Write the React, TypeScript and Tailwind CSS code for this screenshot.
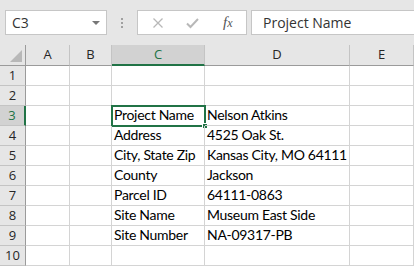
import { Fragment } from 'react';

const cols = ['A', 'B', 'C', 'D', 'E'];

const data: Record<number, [string, string]> = {
  3: ['Project Name', 'Nelson Atkins'],
  4: ['Address', '4525 Oak St.'],
  5: ['City, State Zip', 'Kansas City, MO 64111'],
  6: ['County', 'Jackson'],
  7: ['Parcel ID', '64111-0863'],
  8: ['Site Name', 'Museum East Side'],
  9: ['Site Number', 'NA-09317-PB'],
};

const ui = "font-['Open_Sans','Noto_Sans',sans-serif]";
const cellFont = "font-['Lato','Liberation_Sans',sans-serif] text-[14px] tracking-[-0.3px]";

function FormulaBar() {
  return (
    <div className={`flex h-[45px] items-start bg-[#e6e6e6] pt-[10px] ${ui}`}>
      <div className="ml-[5px] flex h-[25px] w-[102px] items-center justify-between border border-[#c6c6c6] bg-white pl-[6px] pr-[6px] text-[14px] text-[#333]">
        <span>C3</span>
        <span className="h-0 w-0 border-x-[4px] border-t-[4px] border-x-transparent border-t-[#777]" />
      </div>
      <div className="flex h-[25px] w-[30px] flex-col items-center justify-center gap-[2px]">
        <span className="h-[2px] w-[2px] bg-[#a0a0a0]" />
        <span className="h-[2px] w-[2px] bg-[#a0a0a0]" />
        <span className="h-[2px] w-[2px] bg-[#a0a0a0]" />
      </div>
      <div className="flex h-[25px] w-[110px] items-center border border-[#c6c6c6] bg-white">
        <svg className="ml-[14px]" width="12" height="12" viewBox="0 0 12 12">
          <path d="M1.5 1.5 L10.5 10.5 M10.5 1.5 L1.5 10.5" stroke="#b8b8b8" strokeWidth="1.3" fill="none" />
        </svg>
        <svg className="ml-[22px]" width="13" height="12" viewBox="0 0 13 12">
          <path d="M1 6.5 L4.5 10 L12 2" stroke="#b8b8b8" strokeWidth="2" fill="none" />
        </svg>
        <span className="ml-[24px] font-['Liberation_Serif',serif] text-[15px] italic text-[#555]">
          f<span className="text-[12px]">x</span>
        </span>
      </div>
      <div className="ml-[4px] flex h-[25px] flex-1 items-center border border-r-0 border-[#c6c6c6] bg-white pl-[11px] text-[14px] text-[#333]">
        Project Name
      </div>
    </div>
  );
}

export default function App() {
  return (
    <div className="h-[266px] w-[414px] overflow-hidden bg-white">
      <FormulaBar />
      <div className={`grid grid-cols-[26px_44px_42px_93px_145px_64px] ${ui}`}>
        <div className="relative h-[21px] border-b border-r border-[#9b9b9b] bg-[#e6e6e6]">
          <span className="absolute bottom-[3px] right-[3px] h-0 w-0 border-b-[12px] border-l-[12px] border-b-[#b8b8b8] border-l-transparent" />
        </div>
        {cols.map((c) =>
          c === 'C' ? (
            <div
              key={c}
              className="flex h-[21px] items-center justify-center border-b-2 border-r border-b-[#217346] border-r-[#c4c4c4] bg-[#d2d2d2] text-[13px] text-[#217346]"
            >
              {c}
            </div>
          ) : (
            <div
              key={c}
              className="flex h-[21px] items-center justify-center border-b border-r border-b-[#9b9b9b] border-r-[#c4c4c4] bg-[#e6e6e6] text-[13px] text-[#262626]"
            >
              {c}
            </div>
          ),
        )}
        {Array.from({ length: 10 }, (_, i) => i + 1).map((r) => (
          <Fragment key={r}>
            {r === 3 ? (
              <div className="flex h-[20px] items-center justify-center border-b border-r-2 border-b-[#c4c4c4] border-r-[#217346] bg-[#d2d2d2] text-[13px] text-[#217346]">
                {r}
              </div>
            ) : (
              <div className="flex h-[20px] items-center justify-center border-b border-r border-b-[#c4c4c4] border-r-[#9b9b9b] bg-[#e6e6e6] text-[13px] text-[#262626]">
                {r}
              </div>
            )}
            {cols.map((c) => {
              const v = data[r] ? (c === 'C' ? data[r][0] : c === 'D' ? data[r][1] : '') : '';
              return (
                <div
                  key={c}
                  className={`relative flex h-[20px] items-end overflow-visible whitespace-nowrap border-b border-r border-[#d4d4d4] pb-[1px] pl-[2px] leading-[18px] text-black ${cellFont}`}
                >
                  {v}
                  {r === 3 && c === 'C' && (
                    <div className="absolute -left-[1px] -top-[1px] h-[22px] w-[95px] border-2 border-[#217346]">
                      <span className="absolute -bottom-[4px] -right-[4px] h-[6px] w-[6px] border border-white bg-[#217346]" />
                    </div>
                  )}
                </div>
              );
            })}
          </Fragment>
        ))}
      </div>
    </div>
  );
}
